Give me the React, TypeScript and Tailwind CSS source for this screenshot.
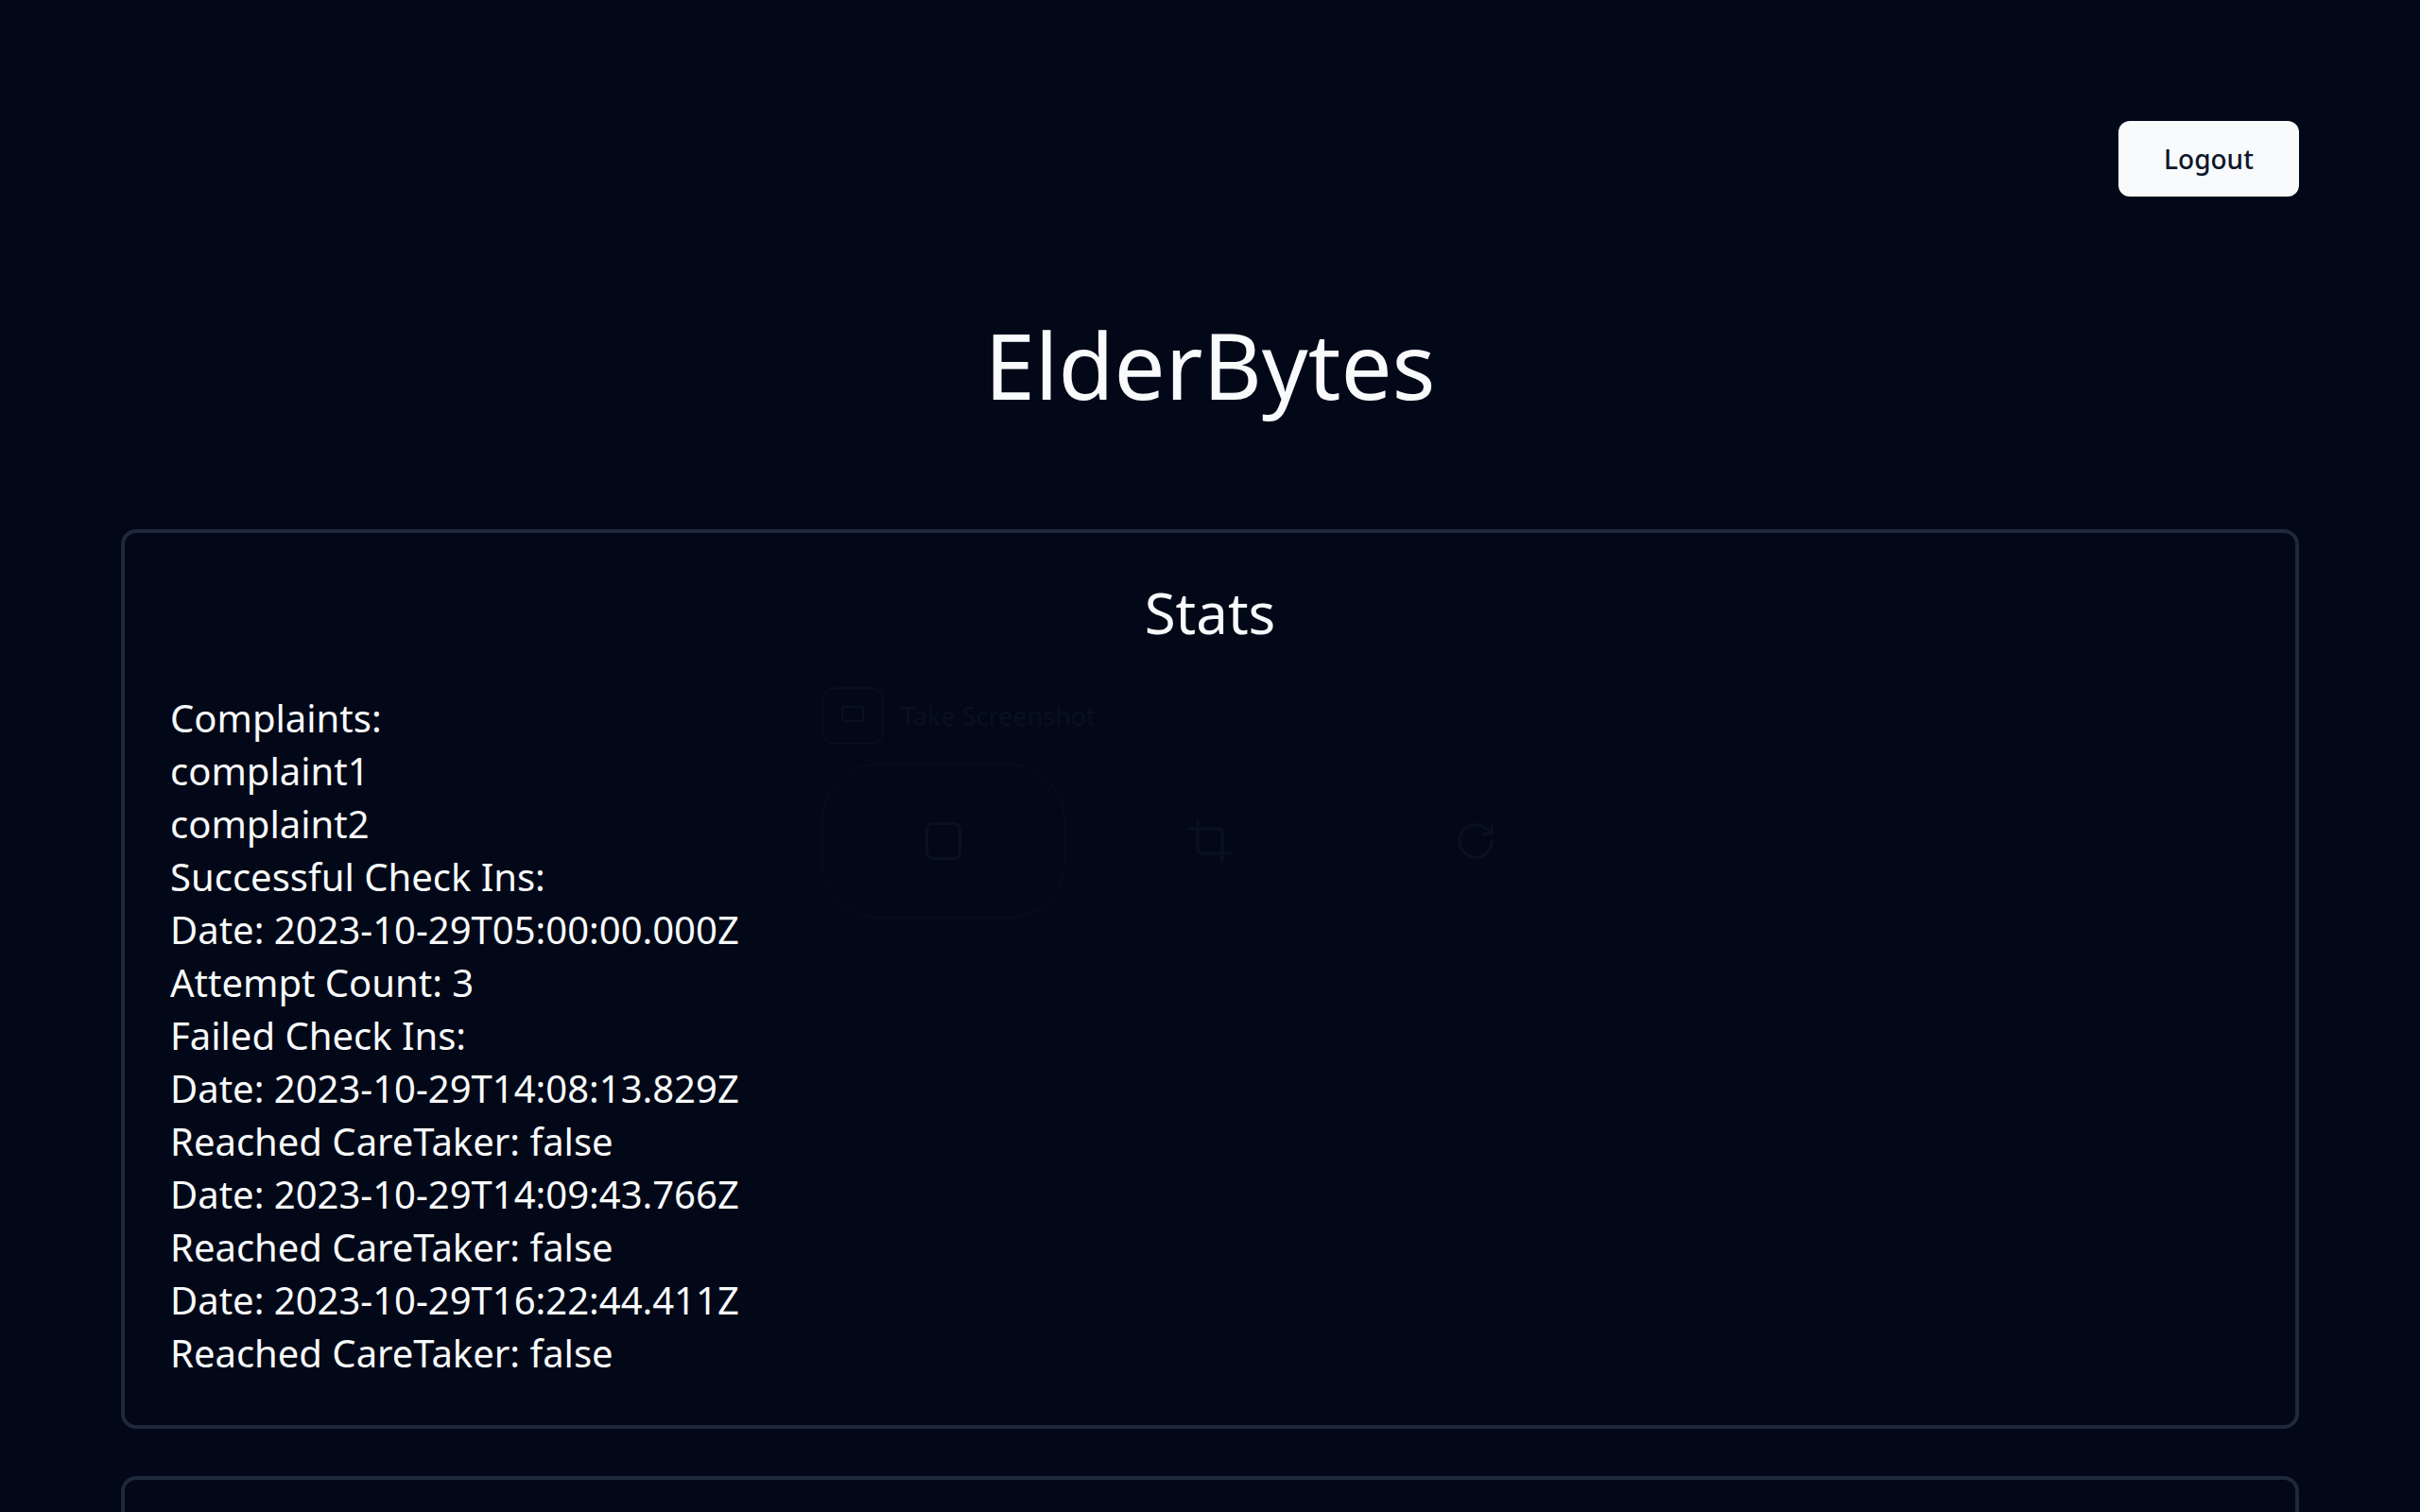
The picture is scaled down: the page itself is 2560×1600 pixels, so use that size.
import { Crop, RotateCw } from "lucide-react";

const lines = [
  "Complaints:",
  "complaint1",
  "complaint2",
  "Successful Check Ins:",
  "Date: 2023-10-29T05:00:00.000Z",
  "Attempt Count: 3",
  "Failed Check Ins:",
  "Date: 2023-10-29T14:08:13.829Z",
  "Reached CareTaker: false",
  "Date: 2023-10-29T14:09:43.766Z",
  "Reached CareTaker: false",
  "Date: 2023-10-29T16:22:44.411Z",
  "Reached CareTaker: false",
];

// faint leftover of the screenshot tool, sits on top of the card
function GhostOverlay() {
  return (
    <div className="pointer-events-none absolute left-[869px] top-[727px] flex flex-col gap-[20px] text-[#091020]">
      <div className="flex items-center gap-[18px]">
        <div className="flex h-[61px] w-[66px] items-start justify-center rounded-[14px] border-2 border-[#070d1c] pt-[18px]">
          <div className="h-[17px] w-[24px] rounded-[3px] border-2 border-[#091020]" />
        </div>
        <span className="whitespace-nowrap text-[27px] leading-[40px]">Take Screenshot</span>
      </div>
      <div className="flex items-center">
        <div className="flex h-[164px] w-[258px] items-center justify-center rounded-[60px] border-2 border-[#060c1b]">
          <div className="h-[40px] w-[38px] rounded-[8px] border-[3px] border-[#091020]" />
        </div>
        <Crop className="ml-[127px]" size={52} strokeWidth={1.6} />
        <RotateCw className="ml-[232px]" size={46} strokeWidth={1.6} />
      </div>
    </div>
  );
}

export default function App() {
  return (
    <div className="relative min-h-screen overflow-hidden bg-[#020817] px-[128px] pt-[128px] font-['Noto_Sans',sans-serif] text-[#f8fafc]">
      <div className="flex justify-end">
        <button className="h-[80px] w-[191px] rounded-[12px] bg-[#f8fafc] text-[28px] font-medium text-[#0f172a]">
          Logout
        </button>
      </div>

      <h1 className="mt-[130px] text-center text-[96px] leading-none">ElderBytes</h1>

      <div className="mt-[126px] rounded-[16px] border-4 border-[#1e293b] p-[48px]">
        <h2 className="text-center text-[60px] leading-[72px]">Stats</h2>
        <div className="mt-[48px] text-[40px] leading-[56px]">
          {lines.map((line, i) => (
            <p key={i}>{line}</p>
          ))}
        </div>
      </div>

      <div className="mt-[50px] h-[400px] rounded-[16px] border-4 border-[#1e293b]" />

      <GhostOverlay />
    </div>
  );
}
